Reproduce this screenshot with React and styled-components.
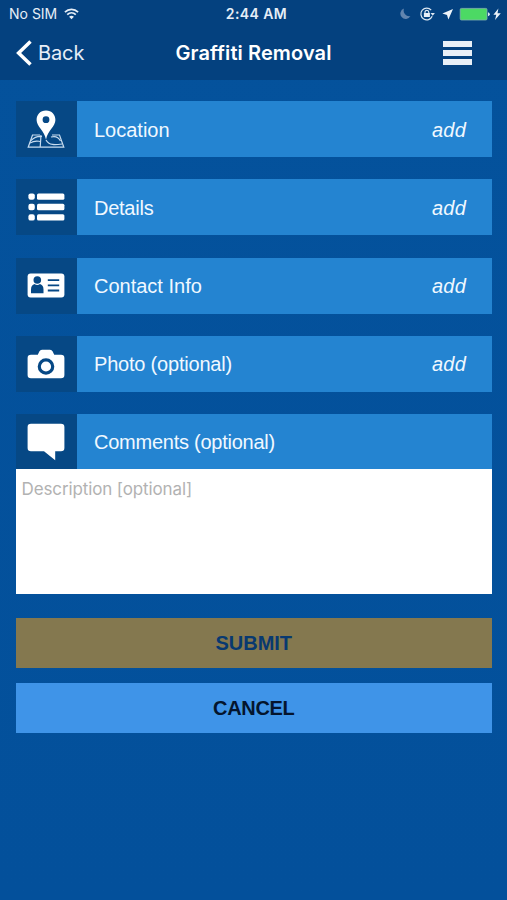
import React from 'react';
import styled, { createGlobalStyle } from 'styled-components';

const GlobalStyle = createGlobalStyle`
	* {
		box-sizing: border-box;
	}
	body {
		margin: 0;
		background-color: #04529c;
		font-family: 'Liberation Sans', Arial, sans-serif;
	}
`;

const Screen = styled.div`
	height: 900px;
	overflow: hidden;
	display: flex;
	flex-direction: column;
	background: linear-gradient(#04529c, #03509b);
`;

const Header = styled.header`
	height: 80px;
	flex-shrink: 0;
	background-color: #04417f;
	font-family: Inter, sans-serif;
	color: #fff;
`;

const StatusBar = styled.div`
	height: 27px;
	padding: 0 5px 0 9px;
	display: grid;
	grid-template-columns: 1fr auto 1fr;
	align-items: center;
	font-size: 14px;
	color: #e6eef7;
`;

const Carrier = styled.div`
	display: flex;
	align-items: center;
	gap: 7px;
	letter-spacing: 0;
`;

const Clock = styled.div`
	font-weight: 600;
	letter-spacing: 0.4px;
	padding-left: 2px;
`;

const StatusIcons = styled.div`
	display: flex;
	align-items: center;
	justify-content: flex-end;
`;

const NavBar = styled.nav`
	height: 52px;
	padding: 0 35px 0 16px;
	display: grid;
	grid-template-columns: 1fr auto 1fr;
	align-items: center;
`;

const BackButton = styled.button`
	display: flex;
	align-items: center;
	gap: 6px;
	padding: 0;
	border: none;
	background: none;
	color: #e6eef7;
	font-family: Inter, sans-serif;
	font-size: 20px;
	letter-spacing: -0.1px;
`;

const Title = styled.h1`
	margin: 0;
	padding-left: 19px;
	font-size: 20px;
	font-weight: 600;
	letter-spacing: 0.1px;
`;

const MenuButton = styled.button`
	justify-self: end;
	display: flex;
	flex-direction: column;
	gap: 3px;
	padding: 0;
	border: none;
	background: none;
`;

const MenuBar = styled.span`
	width: 29px;
	height: 6.2px;
	background-color: #e8eff7;
`;

const Form = styled.main`
	padding: 21px 15px 0 15.5px;
	display: flex;
	flex-direction: column;
`;

const Rows = styled.div`
	display: flex;
	flex-direction: column;
	gap: 22.3px;
`;

const Row = styled.div`
	display: flex;
	height: ${(props) => (props.$short ? '54.8px' : '56px')};
`;

const IconBox = styled.div`
	width: 61.5px;
	display: flex;
	align-items: center;
	justify-content: center;
	background-color: #064885;
`;

const RowBody = styled.div`
	flex: 1;
	padding: 2px 26px 0 17px;
	display: flex;
	align-items: center;
	justify-content: space-between;
	background-color: #2484d1;
	color: #f0f8ff;
	font-size: 20px;
	letter-spacing: ${(props) => props.$tracking || 0};
`;

const Add = styled.span`
	font-style: italic;
	letter-spacing: 0.2px;
`;

const Description = styled.textarea`
	height: 125.5px;
	padding: 10px 6px;
	border: none;
	outline: none;
	resize: none;
	background-color: #fff;
	font-family: Inter, sans-serif;
	font-size: 17px;
	letter-spacing: -0.12px;
	&::placeholder {
		color: #b2b2b2;
		opacity: 1;
	}
`;

const Button = styled.button`
	height: 50px;
	margin-top: ${(props) => props.$gap};
	padding: 1px 0 0;
	border: none;
	background-color: ${(props) => (props.$primary ? '#84784f' : '#3f94e8')};
	color: ${(props) => (props.$primary ? '#083970' : '#04152d')};
	font-family: 'Liberation Sans', Arial, sans-serif;
	font-size: 20px;
	font-weight: bold;
	letter-spacing: ${(props) => (props.$primary ? '0' : '-0.3px')};
`;

const WifiIcon = () => (
	<svg width="15" height="12" viewBox="0 0 15 12" fill="none" stroke="#e6eef7" strokeWidth="1.7">
		<path d="M0.9 4.2 C4.6 0.5 10.4 0.5 14.1 4.2" />
		<path d="M3.2 6.7 C5.7 4.3 9.3 4.3 11.8 6.7" />
		<path d="M7.5 11.2 L5.1 8.7 C6.5 7.4 8.5 7.4 9.9 8.7 Z" fill="#e6eef7" stroke="none" />
	</svg>
);

// moon, rotation lock, location arrow, battery and charging bolt
const DeviceIcons = () => (
	<svg width="103" height="16" viewBox="0 0 103 16">
		<path d="M5 2.6 A5.3 5.3 0 1 0 11.4 10 A5.6 5.6 0 0 1 5 2.6 Z" fill="#6285af" />
		<g fill="none" stroke="#dce7f2" strokeWidth="1.2">
			<path d="M32.2 4.1 A5.9 5.9 0 1 0 33.2 10.3" />
			<path d="M26 7.4 V6.2 A1.9 1.9 0 0 1 29.8 6.2 V7.4" />
		</g>
		<path d="M24.9 7 H30.9 V11 H24.9 Z" fill="#e6eef7" />
		<path d="M31.5 7 H35.9 L33.7 9.7 Z" fill="#dce7f2" />
		<path d="M54 3 L49.4 13.4 L48 8.9 L43.4 7.6 Z" fill="#eef4fa" />
		<rect x="61.2" y="2.4" width="26.8" height="11.6" rx="1.2" fill="#4cd964" stroke="#82b2ae" strokeWidth="0.8" />
		<path d="M89 6.2 Q90.8 6.8 90.8 8.2 Q90.8 9.6 89 10.2 Z" fill="#dce7f2" />
		<path d="M99.4 2.4 L94.4 8.8 H97.3 L96 14 L101.8 7.2 H98.5 Z" fill="#eef4fa" />
	</svg>
);

const ChevronIcon = () => (
	<svg width="16" height="26" viewBox="0 0 16 26" fill="none" stroke="#fff" strokeWidth="3.5">
		<path d="M14.5 1.5 L2.6 13 L14.5 24.5" />
	</svg>
);

const LocationIcon = () => (
	<svg width="38" height="40" viewBox="0 0 38 40">
		<g fill="none" stroke="#c8dcef" strokeWidth="1.2">
			<path d="M13 26 H5.5 L1.2 38.2 H36.8 L32.5 26 H25" />
			<path d="M14 26.2 L13.2 38 M4 31.5 C8 27.5 11 27 15 27.5 M3 34 C8 31 10 32 13.5 32.5" />
			<path d="M19 31 C22 36.5 28 36 35 35 M24 28 C29 26.5 32 29 33.5 32" />
		</g>
		<path
			d="M19 1.5 C13.2 1.5 9.6 5.7 9.6 11 C9.6 17.5 17.2 21.5 19 30.5 C20.8 21.5 28.4 17.5 28.4 11 C28.4 5.7 24.8 1.5 19 1.5 Z M19 7.3 A3.4 3.4 0 1 1 19 14.1 A3.4 3.4 0 1 1 19 7.3 Z"
			fill="#fff"
			fillRule="evenodd"
		/>
	</svg>
);

const ListIcon = () => (
	<svg width="37" height="28" viewBox="0 0 37 28" fill="#fff">
		{[0.4, 10.8, 21.2].map((y) => (
			<g key={y}>
				<rect x="0.4" y={y} width="6.4" height="6.4" rx="2.2" />
				<rect x="9" y={y} width="27.4" height="6.4" rx="1.5" />
			</g>
		))}
	</svg>
);

const ContactIcon = () => (
	<svg width="38" height="25" viewBox="0 0 38 25">
		<rect x="0.6" y="0.5" width="36.8" height="24" rx="3" fill="#fff" />
		<g fill="#064885">
			<circle cx="10.3" cy="7" r="3.8" />
			<path d="M4 20.3 V16.5 C4 13 5.5 11.5 7.5 10.9 Q10.3 13 13 10.9 C15 11.5 16.5 13 16.5 16.5 V20.3 Z" />
			<path d="M20.8 6.2 H32.2 V8 H20.8 Z M20.8 11.4 H32.2 V13.2 H20.8 Z M20.8 16.6 H32.2 V18.4 H20.8 Z" />
		</g>
	</svg>
);

const CameraIcon = () => (
	<svg width="38" height="30" viewBox="0 0 38 30">
		<path
			d="M4 5.8 H10.8 L12.3 2.5 Q13.2 0.7 15 0.7 H23 Q24.8 0.7 25.7 2.5 L27.2 5.8 H34 Q37.4 5.8 37.4 9 V26 Q37.4 29.3 34 29.3 H4 Q0.6 29.3 0.6 26 V9 Q0.6 5.8 4 5.8 Z"
			fill="#fff"
		/>
		<circle cx="19" cy="17.5" r="6.7" fill="#fff" stroke="#064885" strokeWidth="3.2" />
	</svg>
);

const CommentIcon = () => (
	<svg width="38" height="38" viewBox="0 0 38 38">
		<path
			d="M4 0.7 H34 Q37.4 0.7 37.4 4 V25 Q37.4 28.3 34 28.3 H28.2 V37.3 L17 28.3 H4 Q0.6 28.3 0.6 25 V4 Q0.6 0.7 4 0.7 Z"
			fill="#fff"
		/>
	</svg>
);

const rows = [
	{ label: 'Location', icon: <LocationIcon /> },
	{ label: 'Details', icon: <ListIcon />, tracking: '-0.25px' },
	{ label: 'Contact Info', icon: <ContactIcon /> },
	{ label: 'Photo (optional)', icon: <CameraIcon />, tracking: '-0.2px' },
];

const App = () => {
	return (
		<Screen>
			<GlobalStyle />
			<Header>
				<StatusBar>
					<Carrier>
						No SIM
						<WifiIcon />
					</Carrier>
					<Clock>2:44 AM</Clock>
					<StatusIcons>
						<DeviceIcons />
					</StatusIcons>
				</StatusBar>
				<NavBar>
					<BackButton>
						<ChevronIcon />
						Back
					</BackButton>
					<Title>Graffiti Removal</Title>
					<MenuButton aria-label="Menu">
						<MenuBar />
						<MenuBar />
						<MenuBar />
					</MenuButton>
				</NavBar>
			</Header>
			<Form>
				<Rows>
					{rows.map((row) => (
						<Row key={row.label}>
							<IconBox>{row.icon}</IconBox>
							<RowBody $tracking={row.tracking}>
								{row.label}
								<Add>add</Add>
							</RowBody>
						</Row>
					))}
					<Row $short>
						<IconBox>
							<CommentIcon />
						</IconBox>
						<RowBody $tracking="-0.25px">Comments (optional)</RowBody>
					</Row>
				</Rows>
				<Description placeholder="Description [optional]" />
				<Button $primary $gap="23.5px">
					SUBMIT
				</Button>
				<Button $gap="15px">CANCEL</Button>
			</Form>
		</Screen>
	);
};

export default App;
